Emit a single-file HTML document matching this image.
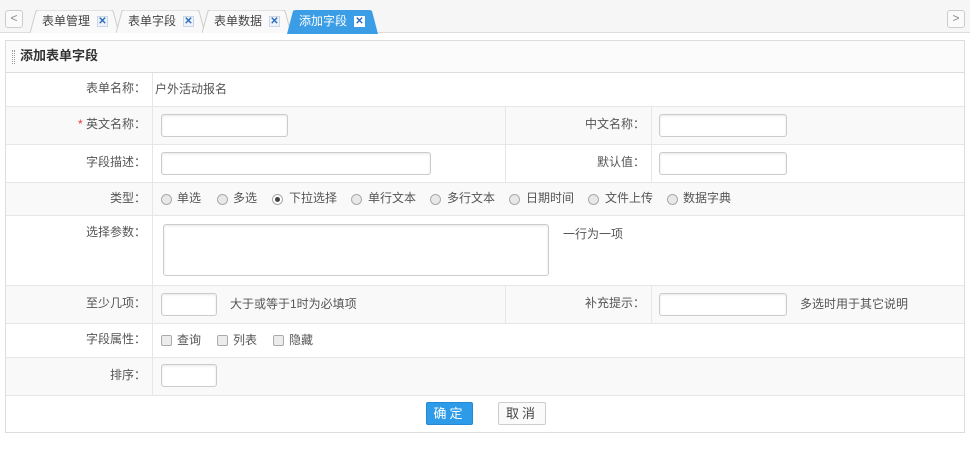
<!DOCTYPE html>
<html><head><meta charset="utf-8"><style>
*{margin:0;padding:0;box-sizing:border-box}
body{width:970px;height:473px;background:#fff;font-family:"Liberation Sans","Noto Sans CJK SC",sans-serif;font-size:12px;color:#555;position:relative;overflow:hidden}
.a{position:absolute}
.top{left:0;top:0;width:970px;height:33px;background:#f6f6f6;border-bottom:1px solid #ddd}
.nav{width:18px;height:18px;border:1px solid #ccc;border-radius:3px;background:#fafafa;color:#888;font-size:12px;text-align:center;line-height:15px}
.tab{height:23px;top:10px;line-height:23px;font-size:12px;color:#444}
.tab svg{position:absolute;left:0;top:0}
.tab span{position:absolute;top:0}
.x{position:absolute;top:6px;width:11px;height:11px;background:#eef3fa;border:1px solid #c9d6e6;color:#2b6cc0;font-size:10px;line-height:9px;text-align:center;font-weight:bold}
.panel{left:5px;top:40px;width:960px;height:393px;border:1px solid #ddd}
.row{position:absolute;left:0;width:958px;border-bottom:1px solid #e6e6e6}
.g{background:#f9f9f9}
.lab{position:absolute;right:0;top:0;width:147px;border-right:1px solid #e6e6e6;height:100%;text-align:right;padding-right:6px}
.inp{position:absolute;border:1px solid #ccc;border-radius:3px;background:#fff;box-shadow:inset 0 1px 2px #e6e6e6}
.t{position:absolute;white-space:nowrap;line-height:14px}
.rd{position:absolute;width:11px;height:11px;border:1px solid #aaa;border-radius:50%;background:#e8e8e8}
.cb{position:absolute;width:11px;height:11px;border:1px solid #aaa;border-radius:2px;background:#ececec}
</style></head><body>
<div class="a top"></div>
<div class="a nav" style="left:5px;top:10px">&lt;</div>
<div class="a nav" style="left:947px;top:10px">&gt;</div>

<div class="a tab" style="left:30px;width:90px"><svg width="90" height="23"><path d="M0 23 L6 1 Q7 0 9 0 L80 0 Q82 0 83 1 L89 23" fill="#f9f9f9" stroke="#ccc"/></svg><span style="left:12px">表单管理</span><div class="x" style="left:67px">✕</div></div>
<div class="a tab" style="left:116px;width:90px"><svg width="90" height="23"><path d="M0 23 L6 1 Q7 0 9 0 L80 0 Q82 0 83 1 L89 23" fill="#f9f9f9" stroke="#ccc"/></svg><span style="left:12px">表单字段</span><div class="x" style="left:67px">✕</div></div>
<div class="a tab" style="left:202px;width:90px"><svg width="90" height="23"><path d="M0 23 L6 1 Q7 0 9 0 L80 0 Q82 0 83 1 L89 23" fill="#f9f9f9" stroke="#ccc"/></svg><span style="left:12px">表单数据</span><div class="x" style="left:67px">✕</div></div>
<div class="a tab" style="left:287px;width:92px;color:#fff"><svg width="92" height="24"><path d="M0 24 L6 1 Q7 0 9 0 L82 0 Q84 0 85 1 L91 24 Z" fill="#3b9de6"/></svg><span style="left:12px">添加字段</span><div class="x" style="left:67px;background:#fff;border-color:#fff">✕</div></div>

<div class="a panel">
 <div class="row" style="top:0;height:32px;background:#fbfbfb;border-bottom-color:#ddd">
  <div class="a" style="left:6px;top:9px;width:3px;height:14px;border-left:1px dotted #999;border-right:1px dotted #999"></div>
  <div class="t" style="left:14px;top:8px;font-size:13px;font-weight:bold;color:#333">添加表单字段</div>
 </div>
 <div class="row" style="top:32px;height:34px"><div class="lab" style="line-height:31px;right:auto;left:0">表单名称：</div><div class="t" style="left:149px;top:9px">户外活动报名</div></div>
 <div class="row g" style="top:66px;height:38px"><div class="lab" style="line-height:35px;right:auto;left:0"><span style="color:#e33">*</span> 英文名称：</div>
  <div class="inp" style="left:155px;top:7px;width:127px;height:23px"></div>
  <div class="a" style="left:499px;top:0;width:147px;height:100%;border-left:1px solid #e6e6e6;border-right:1px solid #e6e6e6;text-align:right;padding-right:6px;line-height:35px">中文名称：</div>
  <div class="inp" style="left:653px;top:7px;width:128px;height:23px"></div></div>
 <div class="row" style="top:104px;height:38px"><div class="lab" style="line-height:35px;right:auto;left:0">字段描述：</div>
  <div class="inp" style="left:155px;top:7px;width:270px;height:23px"></div>
  <div class="a" style="left:499px;top:0;width:147px;height:100%;border-left:1px solid #e6e6e6;border-right:1px solid #e6e6e6;text-align:right;padding-right:6px;line-height:35px">默认值：</div>
  <div class="inp" style="left:653px;top:7px;width:128px;height:23px"></div></div>
 <div class="row g" style="top:142px;height:33px"><div class="lab" style="line-height:30px;right:auto;left:0">类型：</div>
  <div class="rd" style="left:155px;top:11px"></div><div class="t" style="left:171px;top:8px">单选</div>
  <div class="rd" style="left:211px;top:11px"></div><div class="t" style="left:227px;top:8px">多选</div>
  <div class="rd" style="left:266px;top:11px;background:#fff"><div style="width:5px;height:5px;background:#444;border-radius:50%;margin:2px"></div></div><div class="t" style="left:283px;top:8px">下拉选择</div>
  <div class="rd" style="left:345px;top:11px"></div><div class="t" style="left:362px;top:8px">单行文本</div>
  <div class="rd" style="left:424px;top:11px"></div><div class="t" style="left:441px;top:8px">多行文本</div>
  <div class="rd" style="left:503px;top:11px"></div><div class="t" style="left:520px;top:8px">日期时间</div>
  <div class="rd" style="left:582px;top:11px"></div><div class="t" style="left:599px;top:8px">文件上传</div>
  <div class="rd" style="left:661px;top:11px"></div><div class="t" style="left:677px;top:8px">数据字典</div></div>
 <div class="row" style="top:175px;height:70px"><div class="lab" style="padding-top:7px;right:auto;left:0">选择参数：</div>
  <div class="inp" style="left:157px;top:8px;width:386px;height:52px"></div>
  <div class="t" style="left:557px;top:11px">一行为一项</div></div>
 <div class="row g" style="top:245px;height:38px"><div class="lab" style="line-height:35px;right:auto;left:0">至少几项：</div>
  <div class="inp" style="left:155px;top:7px;width:56px;height:23px"></div>
  <div class="t" style="left:224px;top:11px">大于或等于1时为必填项</div>
  <div class="a" style="left:499px;top:0;width:147px;height:100%;border-left:1px solid #e6e6e6;border-right:1px solid #e6e6e6;text-align:right;padding-right:6px;line-height:35px">补充提示：</div>
  <div class="inp" style="left:653px;top:7px;width:128px;height:23px"></div>
  <div class="t" style="left:794px;top:11px">多选时用于其它说明</div></div>
 <div class="row" style="top:283px;height:34px"><div class="lab" style="line-height:31px;right:auto;left:0">字段属性：</div>
  <div class="cb" style="left:155px;top:11px"></div><div class="t" style="left:171px;top:9px">查询</div>
  <div class="cb" style="left:211px;top:11px"></div><div class="t" style="left:227px;top:9px">列表</div>
  <div class="cb" style="left:267px;top:11px"></div><div class="t" style="left:283px;top:9px">隐藏</div></div>
 <div class="row g" style="top:317px;height:38px"><div class="lab" style="line-height:35px;right:auto;left:0">排序：</div>
  <div class="inp" style="left:155px;top:6px;width:56px;height:23px"></div></div>
 <div class="a" style="left:420px;top:361px;width:47px;height:23px;background:#2d9be8;border:1px solid #2489d4;border-radius:2px;color:#fff;text-align:center;line-height:21px;font-size:13px;letter-spacing:3px">确定</div>
 <div class="a" style="left:492px;top:361px;width:48px;height:23px;background:#fafafa;border:1px solid #ccc;border-radius:2px;color:#444;text-align:center;line-height:21px;font-size:13px;letter-spacing:3px">取消</div>
</div>
</body></html>
